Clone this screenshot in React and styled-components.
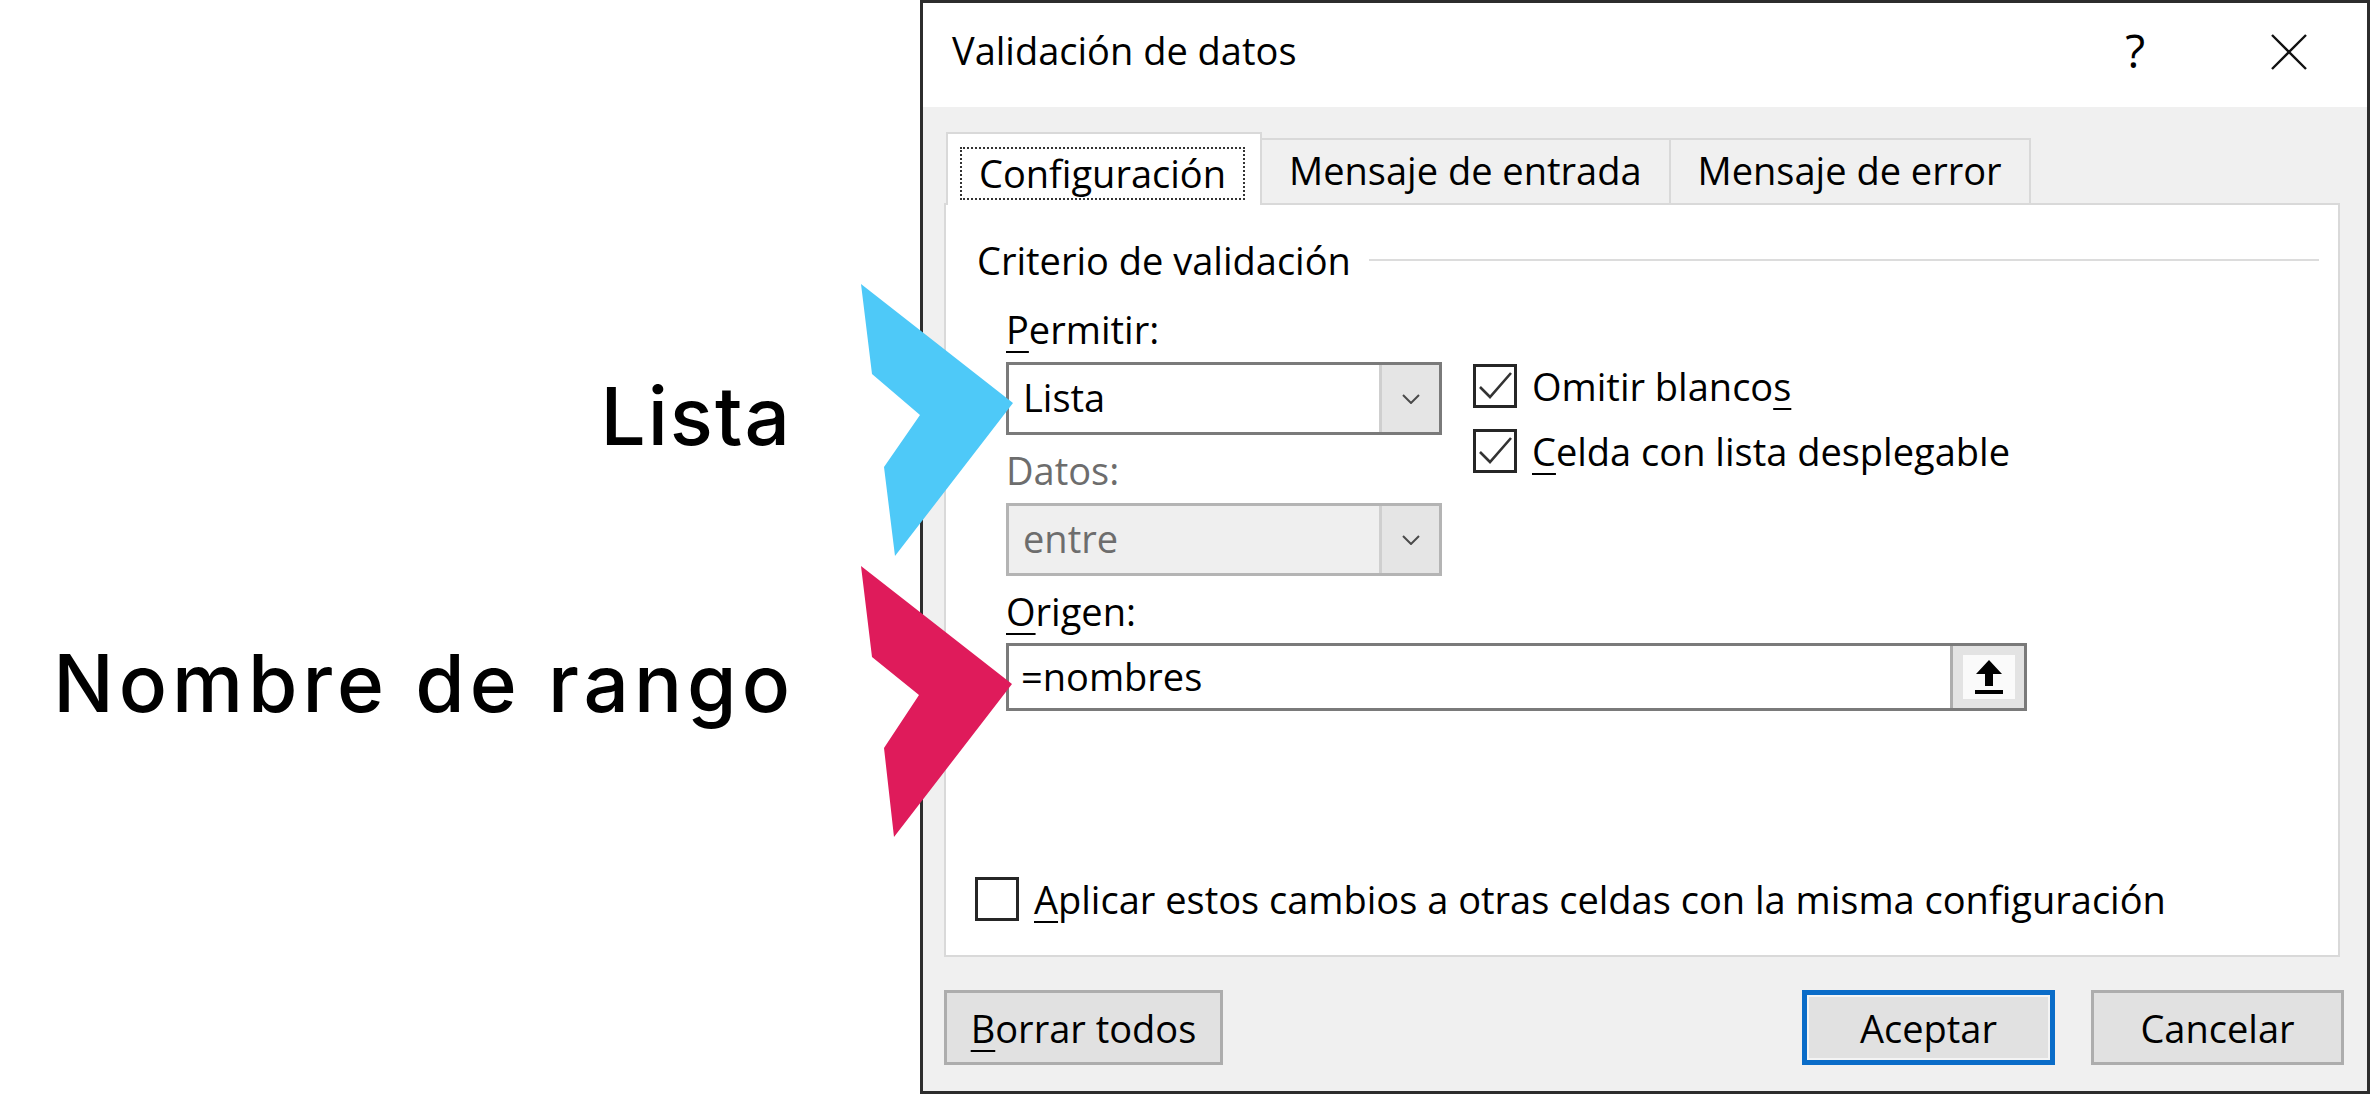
import styled, { createGlobalStyle } from "styled-components";

const GlobalStyle = createGlobalStyle`
  html, body {
    margin: 0;
    padding: 0;
    background: #ffffff;
  }
`;

const Page = styled.div`
  position: relative;
  display: flex;
  width: 2371px;
  height: 1096px;
  overflow: hidden;
  background: #ffffff;
`;

const Callouts = styled.div`
  width: 920px;
  flex-shrink: 0;
  box-sizing: border-box;
  display: flex;
  flex-direction: column;
  align-items: flex-end;
  padding: 376px 130px 0 0;
`;

const Callout = styled.div`
  font-family: Inter, "Noto Sans", sans-serif;
  font-weight: 500;
  font-size: 80px;
  line-height: 80px;
  color: #000;
  white-space: nowrap;
  letter-spacing: ${(p) => p.$track || 0}px;
  margin-top: ${(p) => p.$gap || 0}px;
  margin-right: -${(p) => p.$track || 0}px;
`;

const Pointers = styled.svg`
  position: absolute;
  left: 0;
  top: 0;
  pointer-events: none;
`;

const Dialog = styled.div`
  width: 1450px;
  height: 1094px;
  flex-shrink: 0;
  box-sizing: border-box;
  border: 3px solid #2d2d2d;
  display: flex;
  flex-direction: column;
  font-family: "Open Sans", "Noto Sans", sans-serif;
  font-size: 38px;
  color: #000;
`;

const TitleBar = styled.div`
  height: 104px;
  flex-shrink: 0;
  box-sizing: border-box;
  display: flex;
  align-items: flex-start;
  padding: 21px 60px 0 29px;
  background: #ffffff;
`;

const Title = styled.div`
  flex: 1;
  line-height: 52px;
`;

const HelpGlyph = styled.div`
  font-size: 46px;
  line-height: 52px;
  margin-right: 126px;
`;

const CloseIcon = styled.svg`
  margin-top: 10px;
`;

const Body = styled.div`
  flex: 1;
  display: flex;
  flex-direction: column;
  background: #f0f0f0;
  padding: 25px 27px 25px 21px;
`;

const Tabs = styled.div`
  position: relative;
  z-index: 1;
  display: flex;
  align-items: flex-end;
  margin: 0 0 -2px 2px;
`;

const ActiveTab = styled.div`
  height: 73px;
  box-sizing: border-box;
  padding: 13px 15px 0 12px;
  background: #ffffff;
  border: 2px solid #d9d9d9;
  border-bottom: none;
`;

const FocusRing = styled.div`
  border: 2px dotted #333;
  padding: 0 17px;
  line-height: 49px;
  white-space: nowrap;
`;

const Tab = styled.div`
  height: 65px;
  box-sizing: border-box;
  margin: 0 0 2px -2px;
  padding: 0 27px;
  line-height: 61px;
  white-space: nowrap;
  border: 2px solid #d9d9d9;
  border-bottom: none;
  background: #f0f0f0;
  &:first-of-type {
    margin-left: 0;
  }
`;

const Panel = styled.div`
  height: 754px;
  box-sizing: border-box;
  display: flex;
  flex-direction: column;
  padding: 29px 19px 34px 31px;
  background: #ffffff;
  border: 2px solid #d9d9d9;
`;

const GroupHeader = styled.div`
  display: flex;
  align-items: center;
  gap: 18px;
  line-height: 52px;
`;

const Rule = styled.div`
  flex: 1;
  height: 2px;
  background: #dcdcdc;
`;

const Fields = styled.div`
  display: flex;
  margin: 17px 0 0 29px;
`;

const FieldColumn = styled.div`
  width: 436px;
  display: flex;
  flex-direction: column;
`;

const Label = styled.div`
  line-height: 52px;
  margin-top: ${(p) => p.$gap || 0}px;
  color: ${(p) => (p.$muted ? "#6d6d6d" : "#000")};
`;

const Key = styled.span`
  text-decoration: underline;
  text-decoration-thickness: 2px;
  text-underline-offset: 7px;
`;

const Select = styled.div`
  height: 73px;
  margin-top: 7px;
  box-sizing: border-box;
  display: flex;
  border: 3px solid ${(p) => (p.$disabled ? "#b4b4b4" : "#7a7a7a")};
  background: ${(p) => (p.$disabled ? "#efefef" : "#ffffff")};
`;

const SelectValue = styled.div`
  flex: 1;
  padding-left: 14px;
  line-height: 65px;
  color: ${(p) => (p.$disabled ? "#6d6d6d" : "#000")};
`;

const DropButton = styled.div`
  width: 57px;
  display: flex;
  align-items: center;
  justify-content: center;
  background: #e5e5e5;
  border-left: 3px solid #cfcfcf;
`;

const Checks = styled.div`
  display: flex;
  flex-direction: column;
  gap: 21px;
  margin-left: 31px;
  padding-top: 61px;
`;

const CheckRow = styled.div`
  display: flex;
  align-items: center;
  gap: 15px;
  line-height: 44px;
  white-space: nowrap;
`;

const Box = styled.div`
  width: 44px;
  height: 44px;
  flex-shrink: 0;
  box-sizing: border-box;
  border: 3px solid #262626;
  background: #ffffff;
`;

const OrigenBlock = styled.div`
  display: flex;
  flex-direction: column;
  margin-left: 29px;
`;

const RangeInput = styled.div`
  width: 1021px;
  height: 68px;
  margin-top: 6px;
  box-sizing: border-box;
  display: flex;
  border: 3px solid #7a7a7a;
  background: #ffffff;
`;

const InputValue = styled.div`
  flex: 1;
  padding-left: 12px;
  line-height: 60px;
`;

const PickButton = styled.div`
  width: 71px;
  display: flex;
  align-items: center;
  justify-content: center;
  background: #e3e3e3;
  border-left: 3px solid #adadad;
`;

const PickFace = styled.div`
  width: 52px;
  height: 44px;
  display: flex;
  align-items: center;
  justify-content: center;
  background: #fafafa;
`;

const ApplyRow = styled(CheckRow)`
  margin: auto 0 0 -2px;
`;

const Footer = styled.div`
  display: flex;
  justify-content: space-between;
  margin-top: 33px;
`;

const ButtonGroup = styled.div`
  display: flex;
  gap: 36px;
  margin-right: -4px;
`;

const Button = styled.button`
  width: ${(p) => p.$w}px;
  height: 75px;
  padding: 0;
  box-sizing: border-box;
  font-family: inherit;
  font-size: 38px;
  color: #000;
  background: #e1e1e1;
  border: ${(p) => (p.$primary ? "5px solid #0a6cc8" : "3px solid #adadad")};
  box-shadow: ${(p) => (p.$primary ? "inset 0 0 0 2px #f4f4f4" : "none")};
`;

function Chevron() {
  return (
    <svg width="18" height="10" viewBox="0 0 18 10">
      <polyline points="1,1 9,9 17,1" fill="none" stroke="#4a4a4a" strokeWidth="2" />
    </svg>
  );
}

function Check() {
  return (
    <svg width="38" height="38" viewBox="0 0 38 38">
      <polyline points="4,20 14,30 35,6" fill="none" stroke="#333" strokeWidth="2.6" />
    </svg>
  );
}

function CheckBox({ checked, children }) {
  return (
    <CheckRow>
      <Box>{checked && <Check />}</Box>
      <span>{children}</span>
    </CheckRow>
  );
}

export default function App() {
  return (
    <Page>
      <GlobalStyle />
      <Callouts>
        <Callout $track={2}>Lista</Callout>
        <Callout $gap={187} $track={5}>
          Nombre de rango
        </Callout>
      </Callouts>

      <Dialog>
        <TitleBar>
          <Title>Validación de datos</Title>
          <HelpGlyph>?</HelpGlyph>
          <CloseIcon width="36" height="36" viewBox="0 0 36 36">
            <path d="M1 1 L35 35 M35 1 L1 35" stroke="#111" strokeWidth="2.4" />
          </CloseIcon>
        </TitleBar>

        <Body>
          <Tabs>
            <ActiveTab>
              <FocusRing>Configuración</FocusRing>
            </ActiveTab>
            <Tab>Mensaje de entrada</Tab>
            <Tab>Mensaje de error</Tab>
          </Tabs>

          <Panel>
            <GroupHeader>
              <span>Criterio de validación</span>
              <Rule />
            </GroupHeader>

            <Fields>
              <FieldColumn>
                <Label>
                  <Key>P</Key>ermitir:
                </Label>
                <Select>
                  <SelectValue>Lista</SelectValue>
                  <DropButton>
                    <Chevron />
                  </DropButton>
                </Select>
                <Label $gap={9} $muted>
                  Datos:
                </Label>
                <Select $disabled>
                  <SelectValue $disabled>entre</SelectValue>
                  <DropButton>
                    <Chevron />
                  </DropButton>
                </Select>
              </FieldColumn>
              <Checks>
                <CheckBox checked>
                  Omitir blanco<Key>s</Key>
                </CheckBox>
                <CheckBox checked>
                  <Key>C</Key>elda con lista desplegable
                </CheckBox>
              </Checks>
            </Fields>

            <OrigenBlock>
              <Label $gap={9}>
                <Key>O</Key>rigen:
              </Label>
              <RangeInput>
                <InputValue>=nombres</InputValue>
                <PickButton>
                  <PickFace>
                    <svg width="30" height="36" viewBox="0 0 30 36">
                      <path d="M15 1 L28 15 L19 15 L19 27 L11 27 L11 15 L2 15 Z" fill="#000" />
                      <rect x="1" y="31" width="28" height="4" fill="#000" />
                    </svg>
                  </PickFace>
                </PickButton>
              </RangeInput>
            </OrigenBlock>

            <ApplyRow>
              <Box />
              <span>
                <Key>A</Key>plicar estos cambios a otras celdas con la misma configuración
              </span>
            </ApplyRow>
          </Panel>

          <Footer>
            <Button $w={279}>
              <Key>B</Key>orrar todos
            </Button>
            <ButtonGroup>
              <Button $w={253} $primary>
                Aceptar
              </Button>
              <Button $w={253}>Cancelar</Button>
            </ButtonGroup>
          </Footer>
        </Body>
      </Dialog>

      <Pointers width="2371" height="1096" viewBox="0 0 2371 1096">
        <polygon points="861,284 1013,403 895,556 884,467 920,415 872,374" fill="#4ec9f8" />
        <polygon points="861,566 1012,684 894,837 884,748 919,695 872,657" fill="#df1b5b" />
      </Pointers>
    </Page>
  );
}
